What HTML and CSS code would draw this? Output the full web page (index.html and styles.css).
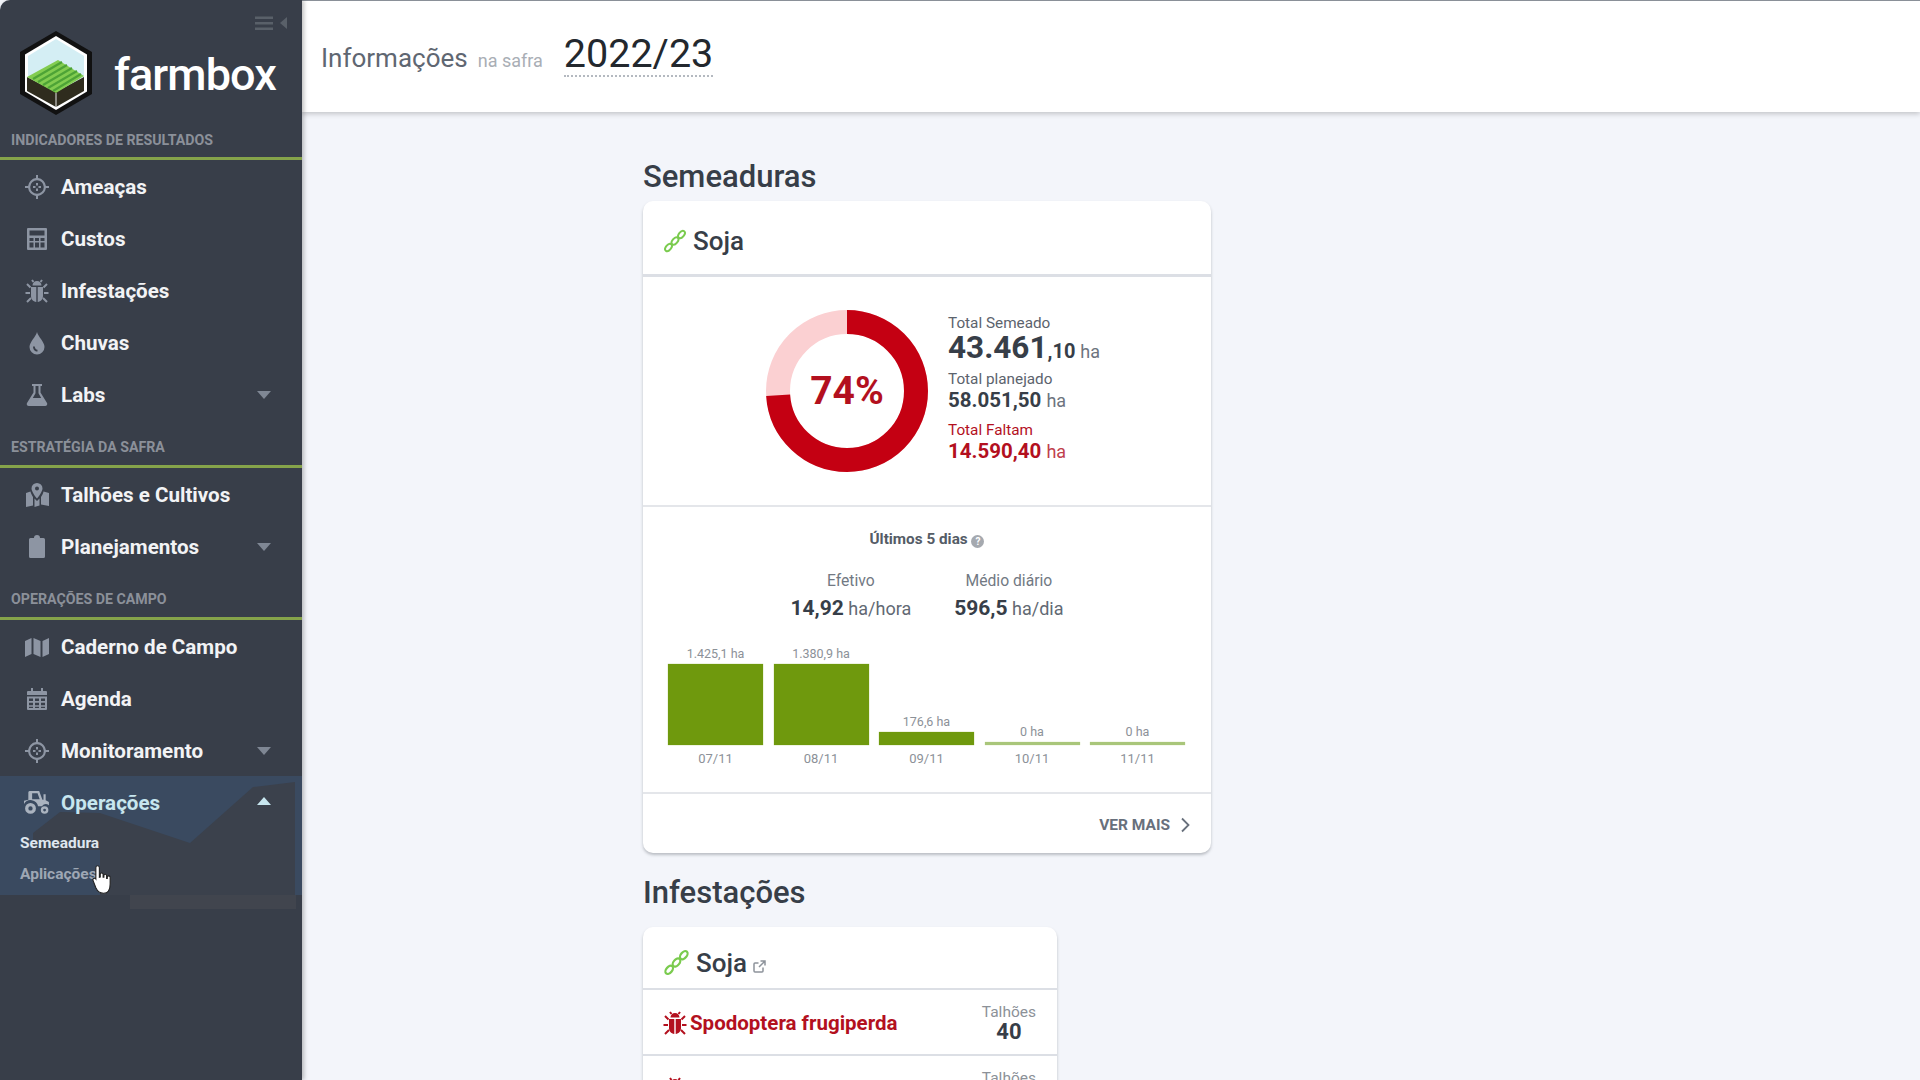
FILE: index.html
```html
<!DOCTYPE html>
<html lang="pt-BR">
<head>
  <meta charset="UTF-8" />
  <title>Farmbox - Informações na safra</title>
  <link rel="stylesheet" href="styles.css">
</head>
<body>
<div class="app">

  <!-- Sidebar -->
  <aside class="sidebar">
    <div class="menu-toggle">
      <svg width="20" height="16" viewBox="0 0 20 16"><path d="M1 1.500h18v2.400H1zM1 7h18v2.400H1zM1 12.500h18v2.400H1z" fill="#596069"/></svg>
      <svg width="7" height="12" viewBox="0 0 7 12"><path d="M7 0v12L0 6z" fill="#596069"/></svg>
    </div>

    <div class="brand">
      <svg class="brand-logo" width="76" height="86" viewBox="0 0 76 86">
        <path d="M38 1 74 22v42L38 85 2 64V22z" fill="#111"/>
        <path d="M38 6 69 24.500v37L38 80 7 61.500v-37z" fill="#fff"/>
        <path d="M38 9 66 26v34L38 77 10 60V26z" fill="#d4eef4"/>
        <path d="M9 47 38 62 66 47v14L38 77 9 61z" fill="#2f2c1e"/>
        <path d="M9 47 40 30 66 46 38 63z" fill="#82cc50"/>
        <path d="M15 49 44 32M20 52 49 35M25 55 54 38M30 58 59 41M35 61 63 44" stroke="#4da336" stroke-width="2.200" fill="none"/>
        <path d="M38 63v14" stroke="#e8e8e8" stroke-width="1"/>
      </svg>
      <span class="brand-name">farmbox</span>
    </div>

    <div class="nav-label">INDICADORES DE RESULTADOS</div>
    <a class="nav-item">
      <svg class="nav-icon" viewBox="0 0 24 24"><use href="#i-crosshair"/></svg>
      <span>Ameaças</span>
    </a>
    <a class="nav-item">
      <svg class="nav-icon" viewBox="0 0 24 24"><path fill-rule="evenodd" d="M3 1h18a1 1 0 0 1 1 1v20a1 1 0 0 1-1 1H3a1 1 0 0 1-1-1V2a1 1 0 0 1 1-1zm1.500 2.500v5h15v-5zm0 7.500v3h4v-3zm5.500 0v3h4v-3zm5.500 0v3h4v-3zm-11 4.500v5h4v-5zm5.500 0v5h4v-5zm5.500 0v5h4v-5z"/></svg>
      <span>Custos</span>
    </a>
    <a class="nav-item">
      <svg class="nav-icon" viewBox="0 0 24 24"><use href="#i-bug"/></svg>
      <span>Infestações</span>
    </a>
    <a class="nav-item">
      <svg class="nav-icon" viewBox="0 0 24 24"><path fill-rule="evenodd" d="M12 1c1 4.500 7.500 10 7.500 15a7.500 7.500 0 0 1-15 0C4.500 11 11 5.500 12 1zM8 15.500c0 3 2 5 4.500 5v-1.800c-1.500 0-2.700-1.400-2.700-3.200z"/></svg>
      <span>Chuvas</span>
    </a>
    <a class="nav-item has-caret">
      <svg class="nav-icon" viewBox="0 0 24 24"><path fill-rule="evenodd" d="M7 1h10v2h-1.500v6.500L22 20c.8 1.500-.2 3-1.800 3H3.800C2.200 23 1.200 21.500 2 20L8.500 9.500V3H7zm3.500 2v7.200L7.800 15h8.400l-2.700-4.800V3z"/></svg>
      <span>Labs</span>
      <i class="caret"></i>
    </a>

    <div class="nav-label">ESTRATÉGIA DA SAFRA</div>
    <a class="nav-item">
      <svg class="nav-icon" viewBox="0 0 24 24"><path fill-rule="evenodd" d="M12 0a5.500 5.500 0 0 1 5.500 5.500C17.500 8.500 13.500 14 12 15.500 10.500 14 6.500 8.500 6.500 5.500A5.500 5.500 0 0 1 12 0zm0 3.500a2 2 0 1 0 0 4 2 2 0 0 0 0-4zM1 10l4.500-1.500c.4 1.800 1.500 4 2.500 5.500v8.500L1 24zM9.500 15.500l2.500 2.500 2.500-2.500v7l-5 1.500zM16 14c1-1.500 2.100-3.500 2.500-5.500L24 10v13l-8-1.500z"/></svg>
      <span>Talhões e Cultivos</span>
    </a>
    <a class="nav-item has-caret">
      <svg class="nav-icon" viewBox="0 0 24 24"><path d="M9 3a3 3 0 0 1 6 0h3.500A1.500 1.500 0 0 1 20 4.500v17a1.500 1.500 0 0 1-1.500 1.500h-13A1.500 1.500 0 0 1 4 21.500v-17A1.500 1.500 0 0 1 5.500 3z"/></svg>
      <span>Planejamentos</span>
      <i class="caret"></i>
    </a>

    <div class="nav-label">OPERAÇÕES DE CAMPO</div>
    <a class="nav-item">
      <svg class="nav-icon" viewBox="0 0 24 24"><path d="M0 6l6.500-3v16L0 22zM8.500 3l7 3v16l-7-3zM17.500 6 24 3v16l-6.500 3z"/></svg>
      <span>Caderno de Campo</span>
    </a>
    <a class="nav-item">
      <svg class="nav-icon" viewBox="0 0 24 24"><path fill-rule="evenodd" d="M6 1h2v3h8V1h2v3h3a1 1 0 0 1 1 1v3H2V5a1 1 0 0 1 1-1h3zM2 9.500h20V22a1 1 0 0 1-1 1H3a1 1 0 0 1-1-1zM4 11.500V14h4v-2.500zm6 0V14h4v-2.500zm6 0V14h4v-2.500zm-12 4.200v2.500h4v-2.500zm6 0v2.500h4v-2.500zm6 0v2.500h4v-2.500zm-12 4.100V21h4v-1.200zm6 0V21h4v-1.200zm6 0V21h4v-1.200z"/></svg>
      <span>Agenda</span>
    </a>
    <a class="nav-item has-caret">
      <svg class="nav-icon" viewBox="0 0 24 24"><use href="#i-crosshair"/></svg>
      <span>Monitoramento</span>
      <i class="caret"></i>
    </a>

    <div class="nav-group">
      <svg class="group-shade" viewBox="0 0 302 119"><path d="M33 57 60 36 100 37 190 67 253 11 295 6V119H100V74H33z" fill="#3b414c"/></svg>
      <a class="nav-item has-caret active">
        <svg class="nav-icon" viewBox="1 2 24 22"><path fill-rule="evenodd" d="M7 2h8l3 8h1V5h2v5.500l3 1.500v3a5 5 0 0 0-6.500 1H14a7 7 0 0 0-13-2v-3l4-1V3.500A1.500 1.500 0 0 1 7 2zm1.500 2v5.500h7L13.500 4zM7 13a5 5 0 1 1 0 10 5 5 0 0 1 0-10zm0 3a2 2 0 1 0 0 4 2 2 0 0 0 0-4zm13 0a3.500 3.500 0 1 1 0 7 3.500 3.500 0 0 1 0-7zm0 2.200a1.300 1.300 0 1 0 0 2.600 1.300 1.300 0 0 0 0-2.600z"/></svg>
        <span>Operações</span>
        <i class="caret up"></i>
      </a>
      <a class="sub-item current">Semeadura</a>
      <a class="sub-item">Aplicações</a>
      <svg class="hand" width="22" height="31" viewBox="0 0 20 28"><path d="M5 1.500c1 0 1.700.8 1.700 1.800V12l.8-.2V9.500c0-1.800 2.600-1.800 2.600 0V12h.7v-1.500c0-1.700 2.500-1.700 2.500 0V13h.6v-1c0-1.700 2.600-1.700 2.600 0v6c0 4-1.500 8.500-6 8.500-4 0-5.500-1.500-7-5L1 15c-.8-1.700 1.400-3 2.500-1.500V3.300c0-1 .6-1.800 1.500-1.800z" fill="#fff" stroke="#222" stroke-width="1"/></svg>
    </div>
    <div class="group-edge"></div>
  </aside>

  <!-- Main area -->
  <div class="main">
    <header class="topbar">
      <span class="topbar-title">Informações</span>
      <span class="topbar-sub">na safra</span>
      <span class="topbar-year">2022/23</span>
    </header>

    <div class="content">
      <h2 class="section-title">Semeaduras</h2>
      <section class="card card-sowing">
        <div class="card-head">
          <svg class="crop-icon" viewBox="0 0 24 24"><use href="#i-chain"/></svg>
          <span>Soja</span>
        </div>

        <div class="summary">
          <div class="donut">
            <svg width="162" height="162" viewBox="0 0 162 162">
              <circle cx="81" cy="81" r="69" fill="none" stroke="#fbd0d2" stroke-width="24"/>
              <circle cx="81" cy="81" r="69" fill="none" stroke="#c40012" stroke-width="24" pathLength="100" stroke-dasharray="74 26" transform="rotate(-90 81 81)"/>
            </svg>
            <span class="donut-value">74%</span>
          </div>
          <div class="totals">
            <div class="total-label">Total Semeado</div>
            <div class="total-main">43.461<small>,10</small> <em>ha</em></div>
            <div class="total-label gap-a">Total planejado</div>
            <div class="total-value">58.051,50 <em>ha</em></div>
            <div class="total-label gap-b red">Total Faltam</div>
            <div class="total-value red">14.590,40 <em>ha</em></div>
          </div>
        </div>

        <div class="recent">
          <div class="recent-title">Últimos 5 dias <i class="help">?</i></div>
          <div class="rates">
            <div class="rate">
              <div class="rate-label">Efetivo</div>
              <div class="rate-value"><b>14,92</b> ha/hora</div>
            </div>
            <div class="rate">
              <div class="rate-label">Médio diário</div>
              <div class="rate-value"><b>596,5</b> ha/dia</div>
            </div>
          </div>
          <div class="bars">
            <div class="bar-col"><span class="bar-num">1.425,1 ha</span><div class="bar" style="height: 81px"></div><span class="bar-date">07/11</span></div>
            <div class="bar-col"><span class="bar-num">1.380,9 ha</span><div class="bar" style="height: 81px"></div><span class="bar-date">08/11</span></div>
            <div class="bar-col"><span class="bar-num">176,6 ha</span><div class="bar" style="height: 13px"></div><span class="bar-date">09/11</span></div>
            <div class="bar-col"><span class="bar-num">0 ha</span><div class="bar empty"></div><span class="bar-date">10/11</span></div>
            <div class="bar-col"><span class="bar-num">0 ha</span><div class="bar empty"></div><span class="bar-date">11/11</span></div>
          </div>
        </div>

        <div class="card-foot">
          <span>VER MAIS</span>
          <svg width="10" height="16" viewBox="0 0 10 16"><path d="M2 1.500 8.500 8 2 14.500" fill="none" stroke="#68707c" stroke-width="1.800"/></svg>
        </div>
      </section>

      <h2 class="section-title second">Infestações</h2>
      <section class="card card-pests">
        <div class="card-head small">
          <svg class="crop-icon big" viewBox="0 0 24 24"><use href="#i-chain"/></svg>
          <span>Soja</span>
          <svg class="ext-link" width="13" height="13" viewBox="0 0 13 13"><path d="M10 7.500V11a1 1 0 0 1-1 1H2a1 1 0 0 1-1-1V4a1 1 0 0 1 1-1h3.500M7.500 1H12v4.500M12 1 6 7" fill="none" stroke="#8d939b" stroke-width="1.500"/></svg>
        </div>
        <div class="pest-row">
          <svg class="pest-icon" viewBox="0 0 24 24"><use href="#i-bug"/></svg>
          <span class="pest-name">Spodoptera frugiperda</span>
          <div class="pest-count"><span>Talhões</span><b>40</b></div>
        </div>
        <div class="pest-row">
          <svg class="pest-icon" viewBox="0 0 24 24"><use href="#i-bug"/></svg>
          <span class="pest-name">Trichoderma</span>
          <div class="pest-count"><span>Talhões</span><b>32</b></div>
        </div>
      </section>
    </div>
  </div>
</div>

<!-- shared icons -->
<svg width="0" height="0" class="defs">
  <defs>
    <g id="i-crosshair">
      <path fill-rule="evenodd" d="M11 0h2v3.100a9 9 0 0 1 7.900 7.900H24v2h-3.100a9 9 0 0 1-7.900 7.900V24h-2v-3.100A9 9 0 0 1 3.100 13H0v-2h3.100A9 9 0 0 1 11 3.100zm1 5.200a6.800 6.800 0 1 0 0 13.600 6.800 6.800 0 0 0 0-13.600z"/>
      <path d="M11 8h2v2.500h-2zM11 13.500h2V16h-2zM8 11h2.500v2H8zM13.500 11H16v2h-2.500z"/>
    </g>
    <g id="i-bug">
      <path d="M7.500 6.500a4.500 4.500 0 0 1 9 0zM6 8h5.300v15C8 22.500 6 20 6 17zM12.700 8H18v9c0 3-2 5.500-5.300 6z"/>
      <path d="M5.500 8.500 2 5M18.500 8.500 22 5M5 14H.5M19 14h4.500M6 19l-4 4M18 19l4 4M8.500 3 7 1M15.500 3 17 1" stroke="currentColor" stroke-width="2" fill="none"/>
    </g>
    <g id="i-chain" fill="none" stroke="#7acb4e" stroke-width="2">
      <ellipse cx="18.500" cy="5.500" rx="4.200" ry="2.600" transform="rotate(-50 18.500 5.500)"/>
      <ellipse cx="12" cy="12" rx="4.200" ry="2.600" transform="rotate(-50 12 12)"/>
      <ellipse cx="5.500" cy="18.500" rx="4.200" ry="2.600" transform="rotate(-50 5.500 18.500)"/>
    </g>
  </defs>
</svg>
</body>
</html>
```

FILE: styles.css
```css
/* Base */
* {
  box-sizing: border-box;
}
html, body {
  margin: 0;
  height: 1080px;
  overflow: hidden;
}
body {
  font-family: Roboto, "Liberation Sans", sans-serif;
  background: #f3f5fa;
  color: #373e48;
}
.defs {
  position: absolute;
}
.app {
  display: flex;
  height: 1080px;
}

/* Sidebar */
.sidebar {
  position: relative;
  width: 302px;
  flex: none;
  background: #383e49;
  border-top-left-radius: 10px;
  box-shadow: 2px 0 4px rgba(0, 0, 0, .25);
  z-index: 2;
}
.menu-toggle {
  position: absolute;
  top: 15px;
  right: 15px;
  display: flex;
  align-items: center;
  gap: 6px;
}
.brand {
  height: 127px;
  display: flex;
  align-items: center;
  padding: 18px 0 0 18px;
  gap: 20px;
}
.brand-name {
  margin-top: 4px;
  color: #fff;
  font-size: 45px;
  font-weight: 500;
  letter-spacing: -.9px;
}
.nav-label {
  height: 33px;
  padding: 4px 0 0 11px;
  font-size: 14.200px;
  font-weight: 700;
  line-height: 18px;
  color: #8b9099;
  border-bottom: 3px solid #85a34a;
}
.nav-item + .nav-label {
  height: 48px;
  padding-top: 18px;
}
.nav-item {
  display: flex;
  align-items: center;
  height: 52px;
  padding: 1px 24px 0 24px;
  gap: 11px;
  font-size: 20.600px;
  font-weight: 700;
  color: #f2f3f5;
}
.nav-icon {
  width: 26px;
  height: 24px;
  flex: none;
  fill: #8d95a3;
  color: #8d95a3;
}
.caret {
  margin-left: auto;
  margin-right: 7px;
  width: 0;
  height: 0;
  border-left: 7px solid transparent;
  border-right: 7px solid transparent;
  border-top: 8px solid #7f8794;
}
.caret.up {
  margin-bottom: 4px;
  border-top: 0;
  border-bottom: 8px solid #c7e6ef;
}
.nav-group {
  position: relative;
  height: 119px;
  background: #3a4a60;
}
.group-shade {
  position: absolute;
  left: 0;
  top: 0;
  width: 302px;
  height: 119px;
}
.nav-group > a {
  position: relative;
}
.nav-item.active {
  color: #c7e6ef;
}
.nav-item.active .nav-icon {
  fill: #aab3bf;
}
.sub-item {
  display: block;
  height: 31px;
  line-height: 31px;
  padding-left: 20px;
  font-size: 15.500px;
  font-weight: 700;
  color: #9ea7b4;
}
.sub-item.current {
  color: #dfe6ee;
}
.hand {
  position: absolute;
  left: 92px;
  top: 88px;
}
.group-edge {
  height: 14px;
  margin: 0 6px 0 130px;
  background: #41454e;
}

/* Top bar */
.main {
  flex: 1;
  min-width: 0;
}
.topbar {
  height: 112px;
  padding-left: 19px;
  display: flex;
  align-items: baseline;
  background: #fff;
  border-top: 1px solid #8a9098;
  box-shadow: 0 2px 5px rgba(0, 0, 0, .2);
  line-height: 114px;
}
.topbar-title {
  font-size: 26px;
  color: #5f6772;
}
.topbar-sub {
  margin-left: 10px;
  font-size: 18px;
  color: #a9aeb5;
}
.topbar-year {
  margin-left: 21px;
  font-size: 39.500px;
  line-height: 42px;
  color: #23282e;
  border-bottom: 2px dotted #b4b9c0;
}

/* Content */
.content {
  padding: 47px 0 0 341px;
}
.section-title {
  margin: 0;
  font-size: 31px;
  font-weight: 500;
  line-height: 36px;
  color: #373e48;
}
.section-title.second {
  margin-top: 22px;
}
.card {
  margin-top: 6px;
  background: #fff;
  border-radius: 10px;
  box-shadow: 0 2px 3px rgba(80, 85, 95, .35);
}
.card-sowing {
  width: 568px;
  height: 652px;
}
.card-pests {
  width: 414px;
  margin-top: 16px;
  height: 400px;
}
.card-head {
  display: flex;
  align-items: center;
  height: 76px;
  padding: 7px 0 0 20px;
  gap: 6px;
  font-size: 26px;
  font-weight: 500;
  border-bottom: 3px solid #dcdfe5;
}
.card-head.small {
  height: 63px;
  padding-top: 10px;
  gap: 6px;
  border-bottom-width: 2px;
}
.crop-icon {
  width: 24px;
  height: 24px;
}
.crop-icon.big {
  width: 27px;
  height: 27px;
}
.ext-link {
  margin: 8px 0 0 0;
}

/* Donut + totals */
.summary {
  display: flex;
  align-items: center;
  height: 230px;
  padding-left: 123px;
  gap: 20px;
  border-bottom: 2px solid #e4e6ea;
}
.donut {
  position: relative;
  width: 162px;
  height: 162px;
}
.donut svg {
  display: block;
}
.donut-value {
  position: absolute;
  left: 0;
  right: 0;
  top: 57px;
  text-align: center;
  font-size: 39px;
  line-height: 48px;
  font-weight: 700;
  color: #b3101e;
}
.totals {
  margin-bottom: 5px;
}
.totals em {
  font-style: normal;
  font-weight: 400;
  font-size: 18px;
  color: #6d747e;
}
.total-main em {
  margin-left: -3px;
}
.total-label {
  font-size: 15.300px;
  line-height: 18px;
  color: #5c636d;
}
.total-label.gap-a {
  margin-top: 3.500px;
}
.total-label.gap-b {
  margin-top: 7.500px;
}
.total-main {
  font-size: 31.500px;
  font-weight: 700;
  line-height: 31px;
}
.total-main small {
  font-size: 20px;
}
.total-value {
  font-size: 20.500px;
  font-weight: 700;
  line-height: 24px;
}
.red {
  color: #b3101e;
}
.red em {
  color: #c0404c;
}

/* Last five days */
.recent {
  height: 287px;
  padding-top: 22px;
  border-bottom: 2px solid #e4e6ea;
}
.recent-title {
  text-align: center;
  font-size: 15.300px;
  font-weight: 700;
  line-height: 20px;
  color: #555c66;
}
.help {
  display: inline-block;
  width: 13px;
  height: 13px;
  border-radius: 50%;
  background: #a5a9af;
  color: #fff;
  font-size: 10px;
  font-style: normal;
  line-height: 13px;
  vertical-align: -1px;
}
.rates {
  display: flex;
  justify-content: center;
  gap: 43px;
  margin-top: 23px;
}
.rate {
  text-align: center;
}
.rate-label {
  font-size: 15.700px;
  line-height: 18px;
  color: #727983;
}
.rate-value {
  margin-top: 5px;
  font-size: 18px;
  line-height: 26px;
  color: #626973;
}
.rate-value b {
  font-size: 21px;
  color: #373e48;
}
.bars {
  display: flex;
  align-items: flex-end;
  height: 130px;
  margin-top: 16px;
  padding: 0 26px 0 25px;
  gap: 10.500px;
}
.bar-col {
  flex: 1;
  display: flex;
  flex-direction: column;
  align-items: center;
}
.bar-num {
  margin-bottom: 1px;
  font-size: 12.500px;
  line-height: 18px;
  color: #8c9198;
}
.bar {
  width: 100%;
  background: #6f990d;
  box-shadow: 0 0 1px #9fbf50;
}
.bar.empty {
  height: 3px;
  background: #a9c67a;
}
.bar-date {
  margin-top: 5px;
  font-size: 13px;
  line-height: 18px;
  color: #8c9198;
}
.card-foot {
  display: flex;
  align-items: center;
  justify-content: flex-end;
  height: 58px;
  padding: 3px 21px 0 0;
  gap: 10px;
  font-size: 15.500px;
  font-weight: 700;
  color: #68707c;
}

/* Pest list */
.pest-row {
  display: flex;
  align-items: center;
  height: 66px;
  padding: 1px 21px 0 20px;
  gap: 3px;
  border-bottom: 2px solid #dcdfe5;
}
.pest-icon {
  width: 24px;
  height: 24px;
  fill: #b3101e;
  color: #b3101e;
}
.pest-name {
  font-size: 20.500px;
  font-weight: 700;
  color: #b3101e;
}
.pest-count {
  margin-left: auto;
  display: flex;
  flex-direction: column;
  align-items: center;
  font-size: 15.500px;
  line-height: 19px;
  color: #8c9198;
}
.pest-count b {
  font-size: 22px;
  line-height: 20px;
  color: #373e48;
}
```
